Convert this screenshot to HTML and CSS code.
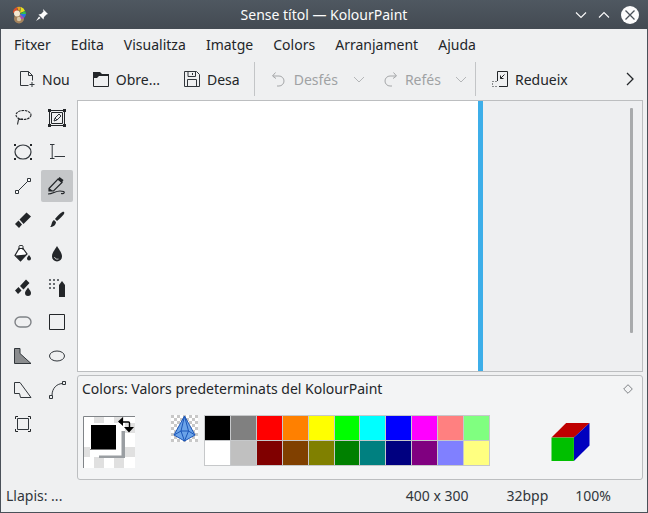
FILE: index.html
```html
<!DOCTYPE html>
<html lang="ca">
<head>
  <meta charset="UTF-8">
  <title>Sense títol — KolourPaint</title>
  <link rel="stylesheet" href="styles.css">
</head>
<body>
  <div class="window">
    <div class="titlebar">
      <div class="title-left">
        <svg class="logo" width="15" height="18" viewBox="0 0 15 18">
          <circle cx="7" cy="12.500" r="5" fill="#a5835c"/>
          <circle cx="7" cy="13" r="2.200" fill="#d9c8a8"/>
          <path d="M1 7a6 6 0 0 1 4-6l1 5z" fill="#d8502c"/>
          <path d="M5 1a6 6 0 0 1 4 0L7 6z" fill="#e8a020"/>
          <path d="M9 1a6 6 0 0 1 4 4L8 7z" fill="#e8e020"/>
          <path d="M13 5a6 6 0 0 1 1 3H8z" fill="#30c050"/>
          <path d="M14 8a6 6 0 0 1-2 4L8 8z" fill="#3070e0"/>
          <path d="M12 12a6 6 0 0 1-3 1L8 9z" fill="#b040c0"/>
          <circle cx="5" cy="7.500" r="3" fill="#f4e8d0"/>
        </svg>
        <svg class="pin" width="12" height="12" viewBox="0 0 12 12">
          <path d="M7 0l5 5-1.500 .5-2.500 2.500-.5 2.500-5-5 2.500-.5 2.500-2.500zM3 7.500l1.500 1.500-4.500 3z" fill="#fcfcfc"/>
        </svg>
      </div>
      <div class="title-text">Sense títol — KolourPaint</div>
      <div class="title-buttons">
        <svg width="12" height="8" viewBox="0 0 12 8"><path d="M1 1.500l5 5 5-5" fill="none" stroke="#fcfcfc" stroke-width="1.100"/></svg>
        <svg width="12" height="8" viewBox="0 0 12 8"><path d="M1 6.500l5-5 5 5" fill="none" stroke="#fcfcfc" stroke-width="1.100"/></svg>
        <svg width="18" height="18" viewBox="0 0 18 18"><circle cx="9" cy="9" r="9" fill="#fcfcfc"/><path d="M4.500 4.500l9 9M13.500 4.500l-9 9" stroke="#4a5159" stroke-width="1.300"/></svg>
      </div>
    </div>

    <div class="menubar">
      <span>Fitxer</span><span>Edita</span><span>Visualitza</span><span>Imatge</span><span>Colors</span><span>Arranjament</span><span>Ajuda</span>
    </div>

    <div class="toolbar">
      <div class="tb-item nou">
        <svg width="16" height="16" viewBox="0 0 16 16"><path d="M9.500 14.500H1.500V.5h8l4 4v5M9.500 .5v4h4M13 11v5M10.500 13.500h5" fill="none" stroke="#31363b"/></svg>
        <span>Nou</span>
      </div>
      <div class="tb-item obre">
        <svg width="16" height="16" viewBox="0 0 16 16"><path d="M.5 1.500h6l2 2h7v12H.5z" fill="none" stroke="#232629"/><path d="M0 1h7l2 2h7v2H6L4 7H0z" fill="#232629"/></svg>
        <span>Obre...</span>
      </div>
      <div class="tb-item desa">
        <svg width="16" height="16" viewBox="0 0 16 16"><path d="M.5 .5h12l3 3v12H.5zM4 .5v5h7.500v-5M8.500 2v2M3.500 15.500v-7h9v7" fill="none" stroke="#31363b"/></svg>
        <span>Desa</span>
      </div>
      <div class="tb-sep first"></div>
      <div class="tb-item desfes off">
        <svg width="16" height="16" viewBox="0 0 16 16"><path d="M4.500 1.500L1.500 5l3.500 2.500M2 5h6a5 5 0 0 1 5 5 5 5 0 0 1-5 5H6" fill="none" stroke="#a4a6a8"/></svg>
        <span>Desfés</span>
      </div>
      <svg class="arrow" width="12" height="7" viewBox="0 0 12 7"><path d="M1 1l5 5 5-5" fill="none" stroke="#b4b6b8"/></svg>
      <div class="tb-item refes off">
        <svg width="16" height="16" viewBox="0 0 16 16"><path d="M11.500 1.500L14.500 5 11 7.500M14 5H8a5 5 0 0 0-5 5 5 5 0 0 0 5 5h2" fill="none" stroke="#a4a6a8"/></svg>
        <span>Refés</span>
      </div>
      <svg class="arrow" width="12" height="7" viewBox="0 0 12 7"><path d="M1 1l5 5 5-5" fill="none" stroke="#b4b6b8"/></svg>
      <div class="tb-sep second"></div>
      <div class="tb-item redueix">
        <svg width="16" height="16" viewBox="0 0 16 16"><path d="M5.500 10V.5h10v15H7" fill="none" stroke="#232629"/><path d="M.5 10.500h1M3.500 10.500h1M.5 12.500v1M.5 15.500h1M3.500 15.500h1" stroke="#232629"/><path d="M12.500 3.500L8.500 7.500M8.500 4.500v3h3" fill="none" stroke="#232629"/></svg>
        <span>Redueix</span>
      </div>
      <svg class="more" width="10" height="14" viewBox="0 0 10 14"><path d="M2 1l6 6-6 6" fill="none" stroke="#232629" stroke-width="1.300"/></svg>
    </div>

    <div class="main">
      <div class="tools">
        <div class="tool"><svg width="18" height="18" viewBox="0 0 18 18"><ellipse cx="9.500" cy="6" rx="7.500" ry="4.500" fill="none" stroke="#232629" stroke-width="1.100" stroke-dasharray="2.500 .8"/><path d="M4.500 10.500l-1 5M4.500 10.500l4.500-.5" fill="none" stroke="#232629" stroke-width="1.100"/></svg></div>
        <div class="tool"><svg width="18" height="18" viewBox="0 0 18 18"><path d="M1.500 1.500h15v15h-15z" fill="none" stroke="#232629"/><path d="M3.500 3.500h11v11h-11z" fill="none" stroke="#232629"/><path d="M0 0h3v3H0zM15 0h3v3h-3zM0 15h3v3H0zM15 15h3v3h-3z" fill="#232629"/><path d="M6 12l1-3 4-4 2 2-4 4zM7 9l2 2" fill="none" stroke="#31363b"/></svg></div>
        <div class="tool"><svg width="18" height="18" viewBox="0 0 18 18"><ellipse cx="9" cy="9" rx="8" ry="7" fill="none" stroke="#31363b" stroke-width="1.200"/><path d="M0 1h2v2H0zM16 1h2v2h-2zM0 15h2v2H0zM16 15h2v2h-2z" fill="#232629"/></svg></div>
        <div class="tool"><svg width="18" height="18" viewBox="0 0 18 18"><path d="M2 1.500h4.500M4.200 1.500v14M2 15.500h4.500M6.500 13.500H17" fill="none" stroke="#31363b"/></svg></div>
        <div class="tool"><svg width="18" height="18" viewBox="0 0 18 18"><path d="M3.500 14.500l11-11" stroke="#31363b"/><path d="M1.500 13.500h3v3h-3zM13.500 1.500h3v3h-3z" fill="#fff" stroke="#31363b"/></svg></div>
        <div class="tool on"><svg width="18" height="18" viewBox="0 0 18 18"><path d="M1 11.500L10 2l4 3.500-8.500 8.500H1z" fill="none" stroke="#232629" stroke-width="1.200"/><path d="M9.500 2.500l2-2.500 4 3-1.500 2.500zM1 11l4 3H1z" fill="#232629"/><path d="M0 17c5 0 7-3 12-3 3 0 5 .5 4 2-.5 1-2 .5-3 .5" fill="none" stroke="#232629" stroke-width="1.200"/></svg></div>
        <div class="tool"><svg width="18" height="18" viewBox="0 0 18 18"><path d="M5.500 8.500L12.500 1.500l4.500 4-7.500 7.500z" fill="#232629"/><path d="M1 13l3.500-3.500 3.500 4L5 17z" fill="#232629"/></svg></div>
        <div class="tool"><svg width="18" height="18" viewBox="0 0 18 18"><path d="M16 1c1 1 0 3-7 9l-2-2c5-6 8-8 9-7zM6 9l2 2c0 3-3 5-6 5 2-1 1-5 4-7z" fill="#232629"/></svg></div>
        <div class="tool"><svg width="18" height="18" viewBox="0 0 18 18"><path d="M5 3.500h4l4 5.500-6.500 7L1 10.500z" fill="#fff" stroke="#232629" stroke-width="1.200"/><path d="M1.500 10.500l11-1-6 6.500z" fill="#232629"/><path d="M5 5V1.500a2 1.200 0 0 1 4 0V5" fill="none" stroke="#232629"/><path d="M15 10c1.500 2 2 2.500 2 3.500a2 2 0 0 1-4 0c0-1 .5-1.500 2-3.500z" fill="#232629"/></svg></div>
        <div class="tool"><svg width="18" height="18" viewBox="0 0 18 18"><path d="M9 1c3 5 5 7 5 10.500a5 5 0 0 1-10 0C4 8 6 6 9 1z" fill="#232629"/><path d="M6.500 12c.5 2 2 2.500 4 2" fill="none" stroke="#eff0f1" stroke-width=".8"/></svg></div>
        <div class="tool"><svg width="18" height="18" viewBox="0 0 18 18"><path d="M6 7l6-6.500 3.500 3.500-6 6.500zM1 11.500L4.500 8 7.500 11.500 4 15z" fill="#232629"/><path d="M14 8.500c2 3 3 4 3 5.500a3 3 0 0 1-6 0c0-1.500 1-2.500 3-5.500z" fill="#232629"/></svg></div>
        <div class="tool"><svg width="18" height="18" viewBox="0 0 18 18"><path d="M14 2l3 4v12h-6V6z" fill="#232629"/><path d="M1 0h2v2H1zM5 0h2v2H5zM9 0h2v2H9zM1 4h2v2H1zM5 4h2v2H5zM1 8h2v2H1zM5 8h2v2H5z" fill="#6a6e72"/></svg></div>
        <div class="tool"><svg width="18" height="12" viewBox="0 0 18 12"><rect x="1" y="1" width="16" height="10" rx="5" fill="none" stroke="#7f8286" stroke-width="1.400"/></svg></div>
        <div class="tool"><svg width="16" height="16" viewBox="0 0 16 16"><path d="M.5 .5h15v15H.5z" fill="none" stroke="#232629"/></svg></div>
        <div class="tool"><svg width="18" height="16" viewBox="0 0 18 16"><path d="M.5 .5H6v5l11 10H.5z" fill="#8a8c8e" stroke="#31363b"/></svg></div>
        <div class="tool"><svg width="18" height="12" viewBox="0 0 18 12"><ellipse cx="9" cy="6" rx="7.500" ry="5" fill="none" stroke="#31363b"/></svg></div>
        <div class="tool"><svg width="18" height="16" viewBox="0 0 18 16"><path d="M.5 .5H6l11 15H6.500l-1-4H.5z" fill="none" stroke="#31363b"/></svg></div>
        <div class="tool"><svg width="18" height="18" viewBox="0 0 18 18"><path d="M4 14.500C4 7 9 2.500 15 2.500" fill="none" stroke="#31363b"/><path d="M1.500 14.500h3v3h-3zM14.500 .5h3v3h-3z" fill="#eff0f1" stroke="#31363b"/></svg></div>
        <div class="tool"><svg width="16" height="16" viewBox="0 0 16 16"><path d="M2.500 2.500h11v11h-11z" fill="none" stroke="#31363b"/><path d="M3 .5H.5V3M13 .5h2.500V3M.5 13v2.500H3M15.500 13v2.500H13" fill="none" stroke="#232629"/></svg></div>
      </div>

      <div class="workspace">
        <div class="canvas-frame">
          <div class="canvas"></div>
          <div class="handle"></div>
          <div class="scroll-area"><div class="scrollbar"></div></div>
        </div>

        <div class="colors">
          <div class="colors-head">
            <span>Colors: Valors predeterminats del KolourPaint</span>
            <svg width="10" height="10" viewBox="0 0 10 10"><path d="M5 .7L9.300 5 5 9.300 .7 5z" fill="none" stroke="#7f8286"/></svg>
          </div>
          <div class="colors-body">
            <svg class="well" width="52" height="52" viewBox="0 0 52 52">
              <rect width="52" height="52" fill="#fff"/>
              <path d="M11 0h10v7H11zM31 0h10v7H31zM42 7h10v10H42zM0 31h7v10H0zM42 31h10v10H42zM11 41h10v11H11zM31 41h10v11H31z" fill="#e0e0e0"/>
              <path d="M.5 52V.5H52" fill="none" stroke="#808488"/>
              <rect x="16" y="15" width="26" height="27" fill="#fff"/>
              <path d="M42 15v27H16v-2.500h22.500V15z" fill="#9a9ea2"/>
              <rect x="8" y="9" width="25" height="24" fill="#000"/>
              <path d="M7 33.500h26" fill="none" stroke="#777"/>
              <path d="M36 6h9.500a1 1 0 0 1 1 1v5" fill="none" stroke="#000" stroke-width="1.400"/>
              <path d="M35 5.500l5-4.500v9zM41 11h10l-5 5.500z" fill="#000"/>
            </svg>
            <svg class="pyramid" width="27" height="27" viewBox="0 0 27 27">
              <defs>
                <pattern id="chk2" width="6" height="6" patternUnits="userSpaceOnUse">
                  <rect width="6" height="6" fill="#fff"/>
                  <rect width="3" height="3" fill="#c8c8c8"/>
                  <rect x="3" y="3" width="3" height="3" fill="#c8c8c8"/>
                </pattern>
              </defs>
              <rect width="27" height="27" fill="url(#chk2)"/>
              <path d="M13.500 1L24 20l-10.500 6L3 20z" fill="#6ba3e8" stroke="#1c56b8"/>
              <path d="M13.500 1L10 16M13.500 1L17.500 16M3 20l7-4h7.500L24 20M10 16l3.500 10M17.500 16l-4 10" fill="none" stroke="#1c56b8"/>
            </svg>
            <div class="palette">
              <i class="c1"></i><i class="c2"></i><i class="c3"></i><i class="c4"></i><i class="c5"></i><i class="c6"></i><i class="c7"></i><i class="c8"></i><i class="c9"></i><i class="c10"></i><i class="c11"></i>
              <i class="c12"></i><i class="c13"></i><i class="c14"></i><i class="c15"></i><i class="c16"></i><i class="c17"></i><i class="c18"></i><i class="c19"></i><i class="c20"></i><i class="c21"></i><i class="c22"></i>
            </div>
            <svg class="cube" width="39" height="39" viewBox="0 0 39 40">
              <path d="M0 16L15 1h24L23 16z" fill="#bf0000"/>
              <path d="M23 16L39 1v23L23 40z" fill="#0000bf"/>
              <path d="M0 16h23v24H0z" fill="#00bf00"/>
            </svg>
          </div>
        </div>
      </div>
    </div>

    <div class="statusbar">
      <span class="st-tool">Llapis: ...</span>
      <span class="st-size">400 x 300</span>
      <span class="st-depth">32bpp</span>
      <span class="st-zoom">100%</span>
    </div>
  </div>
</body>
</html>
```

FILE: styles.css
```css
html, body {
  margin: 0;
  padding: 0;
}
body {
  font-family: 'Noto Sans', sans-serif;
  font-size: 14px;
  color: #232629;
  background: #eff0f1;
}
.window {
  width: 648px;
  height: 513px;
  box-sizing: border-box;
  display: flex;
  flex-direction: column;
  background: #eff0f1;
  border-left: 1px solid #4a5159;
  border-right: 1px solid #4a5159;
  border-bottom: 1px solid #4a5159;
}

/* title bar */
.titlebar {
  height: 29px;
  flex: none;
  margin: 0 -1px;
  display: flex;
  align-items: center;
  color: #fcfcfc;
  font-size: 14px;
  background: linear-gradient(#4f5861, #434a52);
}
.title-left {
  display: flex;
  align-items: center;
  gap: 9px;
  padding-left: 12px;
}
.title-text {
  flex: 1;
  text-align: center;
  padding-left: 25px;
}
.title-buttons {
  display: flex;
  align-items: center;
  gap: 11px;
  padding-right: 9px;
}

/* menu */
.menubar {
  height: 31px;
  flex: none;
  display: flex;
  align-items: center;
  gap: 20.1px;
  padding-left: 13px;
}

/* toolbar */
.toolbar {
  height: 38px;
  flex: none;
  display: flex;
  align-items: center;
}
.tb-item {
  display: flex;
  align-items: center;
  gap: 7px;
}
.tb-item.off {
  color: #a0a2a4;
}
.nou { margin-left: 18px; }
.obre { margin-left: 23px; }
.desa { margin-left: 24px; }
.tb-sep {
  width: 1px;
  height: 34px;
  background: #c3c5c7;
}
.tb-sep.first { margin-left: 14px; }
.desfes { margin-left: 16px; }
.arrow { margin-left: 15px; }
.refes { margin-left: 17px; }
.refes + .arrow { margin-left: 14px; }
.tb-sep.second { margin-left: 8px; }
.redueix { margin-left: 16px; }
.more { margin-left: 57px; }

/* tool palette */
.main {
  flex: 1;
  display: flex;
  min-height: 0;
}
.tools {
  width: 68px;
  flex: none;
  margin-left: 5px;
  margin-top: 3px;
  display: grid;
  grid-template-columns: 34px 34px;
  grid-auto-rows: 34px;
  align-content: start;
}
.tool {
  display: flex;
  align-items: center;
  justify-content: center;
  margin: 1px;
  border-radius: 2px;
}
.tool.on {
  background: #c5c7c9;
}

/* canvas and colors */
.workspace {
  flex: 1;
  margin-left: 3px;
  margin-right: 4px;
  margin-top: 2px;
  display: flex;
  flex-direction: column;
}
.canvas-frame {
  height: 272px;
  flex: none;
  box-sizing: border-box;
  display: flex;
  border: 1px solid #bcbec0;
  background: #eeeff1;
}
.canvas {
  width: 400px;
  background: #fff;
}
.handle {
  width: 5px;
  background: #3daee9;
}
.scroll-area {
  flex: 1;
  display: flex;
  justify-content: flex-end;
  padding: 7px 9px 0 0;
}
.scrollbar {
  width: 3px;
  height: 225px;
  background: #a8aaac;
  border-radius: 1px;
}
.colors {
  height: 105px;
  flex: none;
  margin-top: 3px;
  box-sizing: border-box;
  border: 1px solid #bcbec0;
  border-radius: 3px;
  background: #f3f4f5;
}
.colors-head {
  display: flex;
  justify-content: space-between;
  align-items: center;
  height: 25px;
  padding: 0 9px 0 4px;
}
.colors-body {
  display: flex;
  align-items: flex-start;
  padding-left: 5px;
  margin-top: 14px;
}
.well {
  margin-top: 1px;
}
.pyramid {
  margin-left: 36px;
}
.palette {
  margin-left: 6px;
  width: 286px;
  height: 51px;
  box-sizing: border-box;
  display: grid;
  grid-template-columns: repeat(11, 1fr);
  grid-template-rows: 1fr 1fr;
  gap: 1px;
  padding: 1px;
  background: #c6c8ca;
}
.palette i {
  display: block;
}
.c1 { background: #000; }
.c2 { background: #808080; }
.c3 { background: #f00; }
.c4 { background: #ff8000; }
.c5 { background: #ff0; }
.c6 { background: #0f0; }
.c7 { background: #0ff; }
.c8 { background: #00f; }
.c9 { background: #f0f; }
.c10 { background: #ff8080; }
.c11 { background: #80ff80; }
.c12 { background: #fff; }
.c13 { background: #c0c0c0; }
.c14 { background: #800000; }
.c15 { background: #804000; }
.c16 { background: #808000; }
.c17 { background: #008000; }
.c18 { background: #008080; }
.c19 { background: #000080; }
.c20 { background: #800080; }
.c21 { background: #8080ff; }
.c22 { background: #ffff80; }
.cube {
  margin-left: 61px;
  margin-top: 7px;
}

/* status bar */
.statusbar {
  height: 32px;
  flex: none;
  box-sizing: border-box;
  padding: 0 0 2px 5px;
  display: flex;
  align-items: center;
  color: #31363b;
}
.st-size { margin-left: auto; }
.st-depth { margin-left: 38px; }
.st-zoom { margin-left: 27px; margin-right: 36px; }
```
